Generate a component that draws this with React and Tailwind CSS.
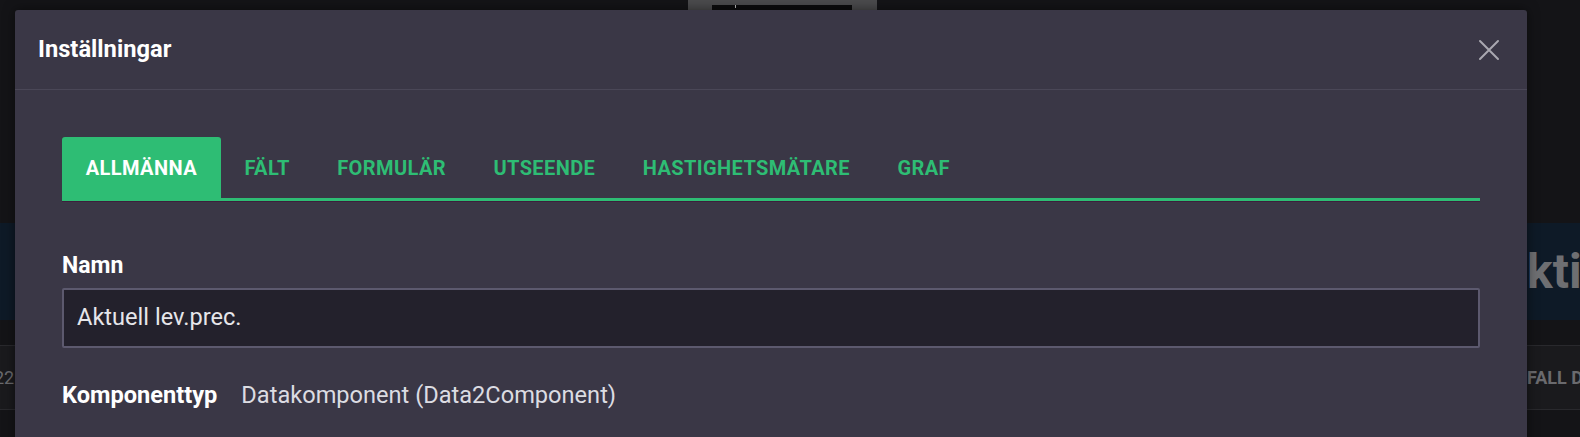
const TABS = ['Allmänna', 'Fält', 'Formulär', 'Utseende', 'Hastighetsmätare', 'Graf']

function CloseIcon() {
  return (
    <svg width="22" height="22" viewBox="0 0 22 22" fill="none" stroke="#a9a8b0" strokeWidth="2" strokeLinecap="round">
      <path d="M2 2 L20 20 M20 2 L2 20" />
    </svg>
  )
}

function Backdrop() {
  return (
    <div className="flex flex-col">
      <div className="flex h-[10px]">
        <div className="ml-[688px] w-[189px] bg-[#4b4b4d] pt-[5px] pl-[24px]">
          <div className="relative h-[5px] w-[140px] bg-[#0c0c0d]">
            <span className="absolute left-[23px] top-0 h-[3px] w-[1px] bg-[#bbbbbb]" />
          </div>
        </div>
      </div>
      <div className="h-[213px]" />
      <div className="flex h-[97px] items-center bg-[#0e1a27] pl-[1527px] text-[48px] font-bold text-[#6e6f72]">
        ktion
      </div>
      <div className="h-[25px]" />
      <div className="flex h-[65px] items-center justify-between border-y border-[#29292d] bg-[#1a1a1d] text-[18px] text-[#6a6a6e]">
        <span className="ml-[-6px]">22</span>
        <span className="w-[53px] overflow-hidden whitespace-nowrap font-bold">FALL DATUM</span>
      </div>
    </div>
  )
}

export default function App() {
  const active = 0
  return (
    <div
      className="relative h-[437px] w-[1580px] overflow-hidden bg-[#141417]"
      style={{ fontFamily: 'Roboto, "Liberation Sans", sans-serif' }}
    >
      <Backdrop />

      <div className="absolute left-[15px] top-[10px] h-[460px] w-[1512px] rounded-[3px] bg-[#3a3746] shadow-[0_0_12px_rgba(0,0,0,0.5)]">
        <div className="flex h-[80px] items-center justify-between border-b border-[#4a4757] pl-[23px] pr-[27px]">
          <h2 className="text-[23.7px] font-bold text-white">Inställningar</h2>
          <CloseIcon />
        </div>

        <div className="px-[47px] pt-[47px]">
          <div className="flex border-b-[3px] border-[#2ebd74] shadow-[0_1px_0_#3d1f3d]">
            {TABS.map((tab, i) => (
              <div
                key={tab}
                className={
                  'flex h-[61px] items-center rounded-t-[3px] px-[23.75px] text-[20px] font-bold uppercase tracking-[0.4px] ' +
                  (i === active ? 'bg-[#2ebd74] text-white' : 'text-[#2ebd74]')
                }
              >
                {tab}
              </div>
            ))}
          </div>

          <div className="mt-[51px] text-[23px] font-bold leading-[28px] text-white">Namn</div>
          <div className="mt-[8px] flex h-[60px] items-center rounded-[2px] border-2 border-[#5c596e] bg-[#23212c] px-[13px] text-[23.6px] text-[#e6e6ea]">
            Aktuell lev.prec.
          </div>

          <div className="mt-[33px] flex items-center gap-[24px] text-[23.6px] leading-[28px]">
            <span className="font-bold text-white">Komponenttyp</span>
            <span className="text-[#dcdce2]">Datakomponent (Data2Component)</span>
          </div>
        </div>
      </div>
    </div>
  )
}
